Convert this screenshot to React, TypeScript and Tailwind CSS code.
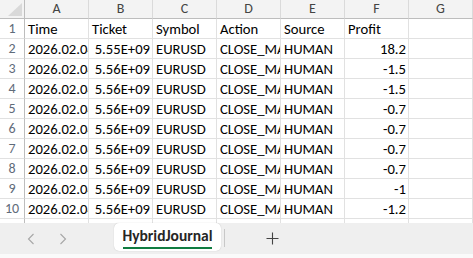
import React from "react";

const cols = ["A", "B", "C", "D", "E", "F", "G"];

type Row = { t: string; k: string; s: string; a: string; src: string; p: string; num?: boolean };

const rows: Row[] = [
  { t: "Time", k: "Ticket", s: "Symbol", a: "Action", src: "Source", p: "Profit" },
  { t: "2026.02.04", k: "5.55E+09", s: "EURUSD", a: "CLOSE_MANUAL", src: "HUMAN", p: "18.2", num: true },
  { t: "2026.02.04", k: "5.56E+09", s: "EURUSD", a: "CLOSE_MANUAL", src: "HUMAN", p: "-1.5", num: true },
  { t: "2026.02.04", k: "5.56E+09", s: "EURUSD", a: "CLOSE_MANUAL", src: "HUMAN", p: "-1.5", num: true },
  { t: "2026.02.04", k: "5.56E+09", s: "EURUSD", a: "CLOSE_MANUAL", src: "HUMAN", p: "-0.7", num: true },
  { t: "2026.02.04", k: "5.56E+09", s: "EURUSD", a: "CLOSE_MANUAL", src: "HUMAN", p: "-0.7", num: true },
  { t: "2026.02.04", k: "5.56E+09", s: "EURUSD", a: "CLOSE_MANUAL", src: "HUMAN", p: "-0.7", num: true },
  { t: "2026.02.04", k: "5.56E+09", s: "EURUSD", a: "CLOSE_MANUAL", src: "HUMAN", p: "-0.7", num: true },
  { t: "2026.02.04", k: "5.56E+09", s: "EURUSD", a: "CLOSE_MANUAL", src: "HUMAN", p: "-1", num: true },
  { t: "2026.02.04", k: "5.56E+09", s: "EURUSD", a: "CLOSE_MANUAL", src: "HUMAN", p: "-1.2", num: true },
];

const font = { fontFamily: "Calibri, Carlito, 'Liberation Sans', Arial, sans-serif" };

function Cell({ children, right }: { children?: React.ReactNode; right?: boolean }) {
  return (
    <div
      className={
        "h-[20px] border-r border-b border-[#e1e1e1] overflow-hidden whitespace-nowrap leading-[20px] text-[14.67px] text-black " +
        (right ? "text-right pr-[2px] pl-[1px]" : "text-left pl-[3px]")
      }
    >
      {children}
    </div>
  );
}

export default function App() {
  return (
    <div className="w-[473px] h-[258px] overflow-hidden flex flex-col bg-white" style={font}>
      <div className="h-[223px] overflow-hidden">
        <div className="grid grid-cols-[25px_repeat(7,64px)]">
          <div className="h-[19px] bg-[#f3f3f3] border-r border-b border-[#bdbdbd] relative">
            <svg className="absolute left-0 top-0" width="24" height="18" viewBox="0 0 24 18">
              <polygon points="22,3 22,16 8,16" fill="#d9d9d9" />
            </svg>
          </div>
          {cols.map((c) => (
            <div
              key={c}
              className="h-[19px] bg-[#f3f3f3] border-r border-[#dadada] border-b-[1px] border-b-[#bdbdbd] text-center text-[14px] leading-[18px] text-[#444]"
            >
              {c}
            </div>
          ))}
          {[...rows, null, null].map((r, i) => (
            <React.Fragment key={i}>
              <div className="h-[20px] border-r border-r-[#bdbdbd] border-b border-b-[#e1e1e1] text-center text-[14px] leading-[20px] text-[#5f6b7a]">
                {i + 1}
              </div>
              {r ? (
                <>
                  <Cell>{r.t}</Cell>
                  <Cell right={r.num}>{r.k}</Cell>
                  <Cell>{r.s}</Cell>
                  <Cell>{r.a}</Cell>
                  <Cell>{r.src}</Cell>
                  <Cell right={r.num}>{r.p}</Cell>
                  <Cell />
                </>
              ) : (
                <>
                  <Cell />
                  <Cell />
                  <Cell />
                  <Cell />
                  <Cell />
                  <Cell />
                  <Cell />
                </>
              )}
            </React.Fragment>
          ))}
        </div>
      </div>
      <div className="h-[31px] bg-[#efefef] flex items-start">
        <div className="w-[114px] h-[31px] flex items-center">
          <svg className="ml-[27px]" width="8" height="12" viewBox="0 0 8 12">
            <path d="M6.5 1 L1.5 6 L6.5 11" fill="none" stroke="#a6a6a6" strokeWidth="1.1" />
          </svg>
          <svg className="ml-[24px]" width="8" height="12" viewBox="0 0 8 12">
            <path d="M1.5 1 L6.5 6 L1.5 11" fill="none" stroke="#a6a6a6" strokeWidth="1.1" />
          </svg>
        </div>
        <div className="w-[107px] h-[28px] bg-white rounded-[5px] shadow-[0_0_1px_rgba(0,0,0,0.25)] flex flex-col items-center pt-[4px]">
          <span className="text-[15.5px] font-bold text-[#262626] leading-[18px]">HybridJournal</span>
          <div className="w-[89px] h-[2px] bg-[#107c41] mt-[2px]" />
        </div>
        <div className="w-px h-[18px] bg-[#c8c8c8] mt-[6px] ml-[3px]" />
        <div className="h-[31px] flex items-center ml-[41px]">
          <svg width="13" height="13" viewBox="0 0 13 13">
            <path d="M6.5 0.5 V12.5 M0.5 6.5 H12.5" stroke="#444" strokeWidth="1.1" />
          </svg>
        </div>
      </div>
      <div className="flex-1 bg-[#fafafa]" />
    </div>
  );
}
